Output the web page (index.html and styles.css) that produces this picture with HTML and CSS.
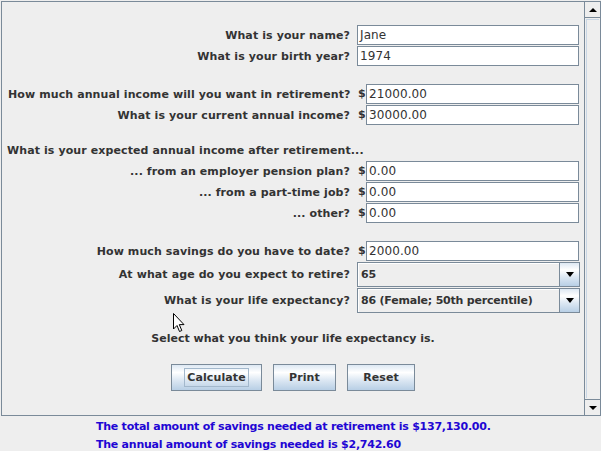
FILE: index.html
```html
<!DOCTYPE html>
<html>
<head>
<meta charset="utf-8">
<link rel="stylesheet" href="styles.css">
</head>
<body>
<div class="pane">
  <div class="viewport">
    <div class="form">
      <div class="row"><span class="lbl">What is your name?</span><div class="field"><span class="input">Jane</span></div></div>
      <div class="row"><span class="lbl">What is your birth year?</span><div class="field"><span class="input">1974</span></div></div>
      <div class="row gap"><span class="lbl">How much annual income will you want in retirement?</span><div class="field"><span class="cur">$</span><span class="input">21000.00</span></div></div>
      <div class="row"><span class="lbl">What is your current annual income?</span><div class="field"><span class="cur">$</span><span class="input">30000.00</span></div></div>
      <div class="row heading"><span class="lbl lbl-left">What is your expected annual income after retirement...</span></div>
      <div class="row"><span class="lbl">... from an employer pension plan?</span><div class="field"><span class="cur">$</span><span class="input">0.00</span></div></div>
      <div class="row"><span class="lbl">... from a part-time job?</span><div class="field"><span class="cur">$</span><span class="input">0.00</span></div></div>
      <div class="row"><span class="lbl">... other?</span><div class="field"><span class="cur">$</span><span class="input">0.00</span></div></div>
      <div class="row gap"><span class="lbl">How much savings do you have to date?</span><div class="field"><span class="cur">$</span><span class="input">2000.00</span></div></div>
      <div class="row combo-row"><span class="lbl">At what age do you expect to retire?</span><div class="combo"><span class="combo-value">65</span><span class="combo-btn"><svg width="10" height="5" viewBox="0 0 10 5"><path d="M1 0h8l-4 5z" fill="#000"/></svg></span></div></div>
      <div class="row combo-row"><span class="lbl">What is your life expectancy?</span><div class="combo"><span class="combo-value">86 (Female; 50th percentile)</span><span class="combo-btn"><svg width="10" height="5" viewBox="0 0 10 5"><path d="M1 0h8l-4 5z" fill="#000"/></svg></span></div></div>
    </div>
    <p class="hint">Select what you think your life expectancy is.</p>
    <div class="buttons">
      <button class="btn btn-calc"><span class="focus">Calculate</span></button>
      <button class="btn btn-print">Print</button>
      <button class="btn btn-reset">Reset</button>
    </div>
    <svg class="cursor" width="13" height="20" viewBox="0 0 13 20"><path d="M0.5 0.5 L0.5 16 L4 12.5 L6.5 18.5 L8.8 17.5 L6.3 11.6 L11 11.6 Z" fill="#fff" stroke="#000" stroke-width="1" stroke-linejoin="miter"/></svg>
  </div>
  <div class="scrollbar">
    <div class="sb-btn"><svg width="8" height="4" viewBox="0 0 8 4"><path d="M0 4h8L4 0z" fill="#000"/></svg></div>
    <div class="sb-track"><div class="sb-thumb"></div></div>
    <div class="sb-btn"><svg width="8" height="4" viewBox="0 0 8 4"><path d="M0 0h8L4 4z" fill="#000"/></svg></div>
  </div>
</div>
<div class="result">
  <div class="result-text">
    <div>The total amount of savings needed at retirement is $137,130.00.</div>
    <div>The annual amount of savings needed is $2,742.60</div>
  </div>
</div>
</body>
</html>
```
FILE: styles.css
```css
html, body {
  margin: 0;
  padding: 0;
  background: #eeeeee;
}
body {
  padding: 1px 0 0 1px;
  font-family: "DejaVu Sans", sans-serif;
  font-size: 11px;
  font-weight: bold;
  color: #333333;
  width: 600px;
  height: 450px;
  overflow: hidden;
}
.pane {
  width: 598px;
  height: 413px;
  border: 1px solid #7a8a99;
  display: flex;
}
.viewport {
  position: relative;
  width: 582px;
  height: 413px;
  padding: 23px 0 0 6px;
  box-sizing: border-box;
}
.form {
  display: flex;
  flex-direction: column;
}
.row {
  display: grid;
  grid-template-columns: 342px 222px;
  column-gap: 7px;
  height: 20px;
  margin-bottom: 1px;
  align-items: center;
}
.row.gap {
  margin-top: 17px;
}
.row.heading {
  margin-top: 14px;
}
.row.combo-row {
  height: 25px;
}
.lbl {
  text-align: right;
  white-space: nowrap;
  letter-spacing: 0.1px;
}
.lbl-left {
  text-align: left;
  margin-left: -1px;
}
.field {
  display: flex;
  height: 20px;
  align-items: stretch;
}
.cur {
  width: 8px;
  line-height: 20px;
  padding-left: 1px;
}
.input {
  flex: 1;
  background: #ffffff;
  border: 1px solid #7a8a99;
  box-sizing: border-box;
  font-weight: normal;
  font-size: 12px;
  letter-spacing: 0.1px;
  line-height: 18px;
  padding-left: 2px;
  color: #333333;
}
.combo {
  display: flex;
  height: 25px;
  border: 1px solid #7a8a99;
  box-sizing: border-box;
  width: 223px;
  background: #eeeeee;
}
.combo-value {
  flex: 1;
  line-height: 23px;
  padding-left: 3px;
  letter-spacing: -0.2px;
  border-right: 1px solid #7a8a99;
  box-shadow: inset 1px 1px 0 #ffffff;
}
.combo-btn {
  width: 19px;
  display: flex;
  align-items: center;
  justify-content: center;
  background: linear-gradient(#dde8f3 0%, #ffffff 30%, #dde8f3 60%, #b8cfe5 100%);
}
.hint {
  margin: 15px 0 0 -6px;
  height: 20px;
  line-height: 20px;
  text-align: center;
  letter-spacing: 0;
}
.buttons {
  margin: 15px 0 0 -6px;
  display: flex;
  justify-content: center;
  gap: 11px;
}
.btn {
  height: 27px;
  border: 1px solid #7a8a99;
  background: linear-gradient(#dde8f3 0%, #ffffff 30%, #dde8f3 60%, #b8cfe5 100%);
  font: inherit;
  color: #333333;
  letter-spacing: 0.1px;
  padding: 0;
  display: flex;
  align-items: center;
  justify-content: center;
}
.btn-calc { width: 91px; }
.btn-print { width: 63px; }
.btn-reset { width: 68px; }
.focus {
  border: 1px solid #a3b8cc;
  padding: 1px 2px;
  line-height: 15px;
}
.cursor {
  position: absolute;
  left: 171px;
  top: 311px;
}
.scrollbar {
  width: 16px;
  height: 413px;
  display: flex;
  flex-direction: column;
  border-left: 1px solid #7a8a99;
  box-sizing: border-box;
}
.sb-btn {
  height: 16px;
  display: flex;
  align-items: center;
  justify-content: center;
  background: #eeeeee;
  border-bottom: 1px solid #7a8a99;
  box-sizing: border-box;
}
.sb-btn:last-child {
  border-bottom: none;
  border-top: 1px solid #7a8a99;
}
.sb-track {
  flex: 1;
  padding: 1px;
}
.sb-thumb {
  height: 100%;
  box-sizing: border-box;
  border-left: 1px solid #c8d6e5;
  border-top: 1px solid #c8d6e5;
}
.result {
  display: flex;
  justify-content: flex-start;
  padding: 2px 0 0 95px;
}
.result-text {
  color: #1f06d4;
  line-height: 18px;
  letter-spacing: -0.25px;
}
```
